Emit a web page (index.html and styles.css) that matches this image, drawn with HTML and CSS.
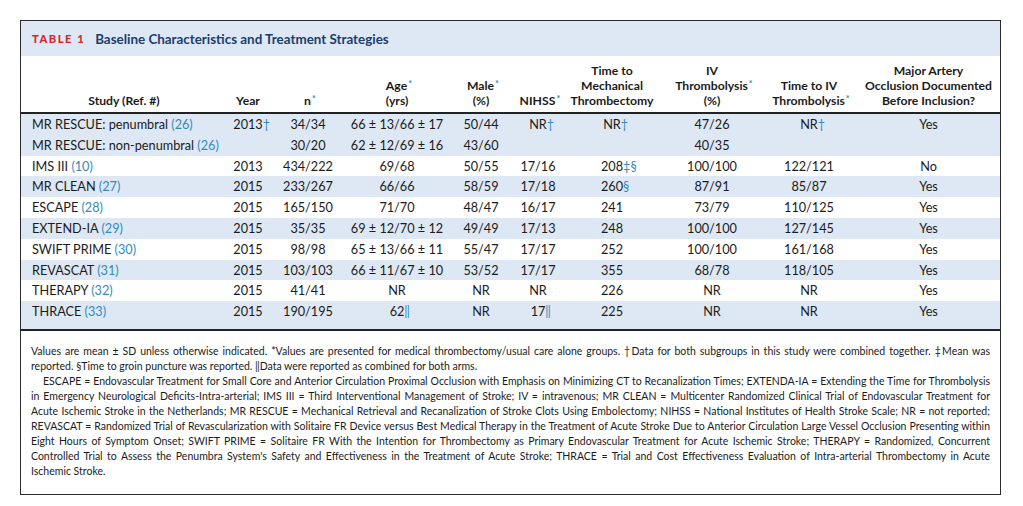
FILE: index.html
```html
<!DOCTYPE html>
<html>
<head>
<meta charset="utf-8">
<link rel="stylesheet" href="styles.css">
</head>
<body>
<div class="card">
  <div class="title"><span class="label">TABLE 1</span><span class="caption">Baseline Characteristics and Treatment Strategies</span></div>
  <table class="data">
    <colgroup>
      <col class="c-study"><col class="c-year"><col class="c-n"><col class="c-age"><col class="c-male"><col class="c-nihss"><col class="c-mech"><col class="c-iv"><col class="c-tiv"><col class="c-major">
    </colgroup>
    <thead>
      <tr>
        <th>Study (Ref. #)</th>
        <th>Year</th>
        <th>n<span class="mk">*</span></th>
        <th>Age<span class="mk">*</span><br>(yrs)</th>
        <th>Male<span class="mk">*</span><br>(%)</th>
        <th>NIHSS<span class="mk">*</span></th>
        <th>Time to<br>Mechanical<br>Thrombectomy</th>
        <th>IV<br>Thrombolysis<span class="mk">*</span><br>(%)</th>
        <th>Time to IV<br>Thrombolysis<span class="mk">*</span></th>
        <th>Major Artery<br>Occlusion Documented<br>Before Inclusion?</th>
      </tr>
    </thead>
    <tbody>
      <tr class="shade">
        <td>MR RESCUE: penumbral <span class="ref">(26)</span></td>
        <td>2013<span class="mk">†</span></td>
        <td>34/34</td>
        <td>66 ± 13/66 ± 17</td>
        <td>50/44</td>
        <td>NR<span class="mk">†</span></td>
        <td>NR<span class="mk">†</span></td>
        <td>47/26</td>
        <td>NR<span class="mk">†</span></td>
        <td>Yes</td>
      </tr>
      <tr class="shade">
        <td>MR RESCUE: non-penumbral <span class="ref">(26)</span></td>
        <td></td>
        <td>30/20</td>
        <td>62 ± 12/69 ± 16</td>
        <td>43/60</td>
        <td></td>
        <td></td>
        <td>40/35</td>
        <td></td>
        <td></td>
      </tr>
      <tr>
        <td>IMS III <span class="ref">(10)</span></td>
        <td>2013</td>
        <td>434/222</td>
        <td>69/68</td>
        <td>50/55</td>
        <td>17/16</td>
        <td>208<span class="mk">‡§</span></td>
        <td>100/100</td>
        <td>122/121</td>
        <td>No</td>
      </tr>
      <tr class="shade">
        <td>MR CLEAN <span class="ref">(27)</span></td>
        <td>2015</td>
        <td>233/267</td>
        <td>66/66</td>
        <td>58/59</td>
        <td>17/18</td>
        <td>260<span class="mk">§</span></td>
        <td>87/91</td>
        <td>85/87</td>
        <td>Yes</td>
      </tr>
      <tr>
        <td>ESCAPE <span class="ref">(28)</span></td>
        <td>2015</td>
        <td>165/150</td>
        <td>71/70</td>
        <td>48/47</td>
        <td>16/17</td>
        <td>241</td>
        <td>73/79</td>
        <td>110/125</td>
        <td>Yes</td>
      </tr>
      <tr class="shade">
        <td>EXTEND-IA <span class="ref">(29)</span></td>
        <td>2015</td>
        <td>35/35</td>
        <td>69 ± 12/70 ± 12</td>
        <td>49/49</td>
        <td>17/13</td>
        <td>248</td>
        <td>100/100</td>
        <td>127/145</td>
        <td>Yes</td>
      </tr>
      <tr>
        <td>SWIFT PRIME <span class="ref">(30)</span></td>
        <td>2015</td>
        <td>98/98</td>
        <td>65 ± 13/66 ± 11</td>
        <td>55/47</td>
        <td>17/17</td>
        <td>252</td>
        <td>100/100</td>
        <td>161/168</td>
        <td>Yes</td>
      </tr>
      <tr class="shade">
        <td>REVASCAT <span class="ref">(31)</span></td>
        <td>2015</td>
        <td>103/103</td>
        <td>66 ± 11/67 ± 10</td>
        <td>53/52</td>
        <td>17/17</td>
        <td>355</td>
        <td>68/78</td>
        <td>118/105</td>
        <td>Yes</td>
      </tr>
      <tr>
        <td>THERAPY <span class="ref">(32)</span></td>
        <td>2015</td>
        <td>41/41</td>
        <td>NR</td>
        <td>NR</td>
        <td>NR</td>
        <td>226</td>
        <td>NR</td>
        <td>NR</td>
        <td>Yes</td>
      </tr>
      <tr class="shade last">
        <td>THRACE <span class="ref">(33)</span></td>
        <td>2015</td>
        <td>190/195</td>
        <td>62<span class="mk">‖</span></td>
        <td>NR</td>
        <td>17<span class="mk">‖</span></td>
        <td>225</td>
        <td>NR</td>
        <td>NR</td>
        <td>Yes</td>
      </tr>
    </tbody>
  </table>
  <div class="notes">
    <p class="para">
      <span class="ln">Values are mean ± SD unless otherwise indicated. *Values are presented for medical thrombectomy/usual care alone groups. †Data for both subgroups in this study were combined together. ‡Mean was</span>
      <span class="ln end">reported. §Time to groin puncture was reported. ‖Data were reported as combined for both arms.</span>
    </p>
    <p class="para">
      <span class="ln indent">ESCAPE = Endovascular Treatment for Small Core and Anterior Circulation Proximal Occlusion with Emphasis on Minimizing CT to Recanalization Times; EXTENDA-IA = Extending the Time for Thrombolysis</span>
      <span class="ln">in Emergency Neurological Deficits-Intra-arterial; IMS III = Third Interventional Management of Stroke; IV = intravenous; MR CLEAN = Multicenter Randomized Clinical Trial of Endovascular Treatment for</span>
      <span class="ln">Acute Ischemic Stroke in the Netherlands; MR RESCUE = Mechanical Retrieval and Recanalization of Stroke Clots Using Embolectomy; NIHSS = National Institutes of Health Stroke Scale; NR = not reported;</span>
      <span class="ln">REVASCAT = Randomized Trial of Revascularization with Solitaire FR Device versus Best Medical Therapy in the Treatment of Acute Stroke Due to Anterior Circulation Large Vessel Occlusion Presenting within</span>
      <span class="ln">Eight Hours of Symptom Onset; SWIFT PRIME = Solitaire FR With the Intention for Thrombectomy as Primary Endovascular Treatment for Acute Ischemic Stroke; THERAPY = Randomized, Concurrent</span>
      <span class="ln">Controlled Trial to Assess the Penumbra System's Safety and Effectiveness in the Treatment of Acute Stroke; THRACE = Trial and Cost Effectiveness Evaluation of Intra-arterial Thrombectomy in Acute</span>
      <span class="ln end">Ischemic Stroke.</span>
    </p>
  </div>
</div>
</body>
</html>
```

FILE: styles.css
```css
html, body {
  margin: 0;
  padding: 0;
  background: #ffffff;
}

body {
  font-family: "Lato", "Noto Sans", sans-serif;
  color: #1b1b1b;
}

.card {
  margin: 20px 0 0 20px;
  width: 981px;
  box-sizing: border-box;
  border: 1.5px solid #2b2b2b;
}

.title {
  background: #dde8f4;
  height: 35px;
  display: flex;
  align-items: center;
  padding-left: 11px;
  gap: 10px;
}

.label {
  color: #d8262f;
  font-weight: 900;
  font-size: 11.2px;
  letter-spacing: 1.5px;
}

.caption {
  color: #1c3d6d;
  font-weight: 700;
  font-size: 13.4px;
}

.data {
  width: 100%;
  border-collapse: collapse;
  table-layout: fixed;
}

.c-study { width: 206px; }
.c-year { width: 42px; }
.c-n { width: 78px; }
.c-age { width: 100px; }
.c-male { width: 68px; }
.c-nihss { width: 46px; }
.c-mech { width: 102px; }
.c-iv { width: 98px; }
.c-tiv { width: 96px; }
.c-major { width: auto; }

.data th {
  font-weight: 700;
  font-size: 12.2px;
  line-height: 15px;
  text-align: center;
  vertical-align: bottom;
  padding: 7px 0 4px;
  border-bottom: 2px solid #222;
  white-space: nowrap;
}

.data td {
  font-size: 12.7px;
  line-height: 20.8px;
  padding: 0;
  text-align: center;
  white-space: nowrap;
}

.data td:first-child {
  text-align: left;
  padding-left: 11px;
}

.data tr.shade td {
  background: #dde8f4;
}

.data tr.last td {
  padding-bottom: 7px;
  border-bottom: 2px solid #222;
}

.ref {
  color: #3589bd;
}

.mk {
  display: inline-block;
  width: 0;
  color: #3589bd;
  overflow: visible;
}

th .mk {
  font-size: 9px;
  vertical-align: 3px;
  line-height: 0;
  padding-left: 1px;
}

.notes {
  padding: 13px 10px 15px 10px;
  font-size: 10.5px;
  line-height: 15px;
}

.para {
  margin: 0;
}

.ln {
  display: block;
  text-align: justify;
  text-align-last: justify;
  white-space: nowrap;
}

.ln.end {
  text-align-last: left;
}

.ln.indent {
  padding-left: 12px;
}
```
